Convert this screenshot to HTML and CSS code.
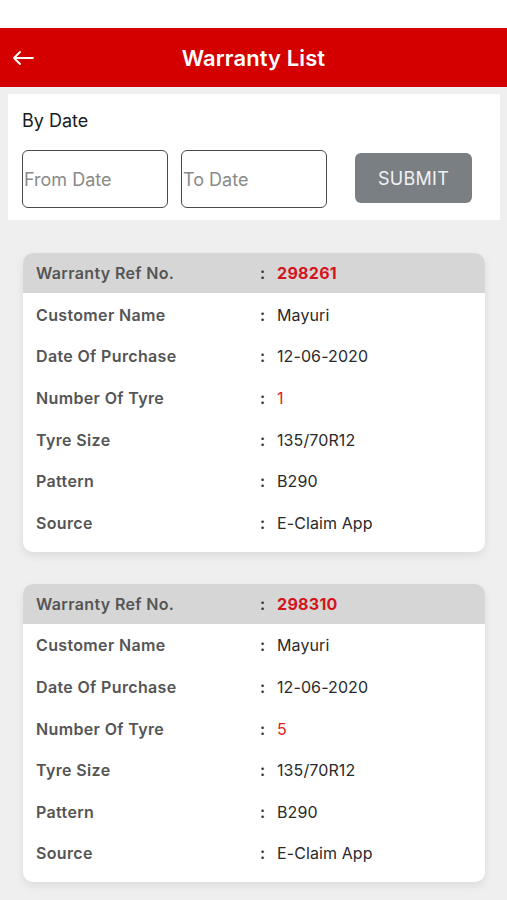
FILE: index.html
```html
<!DOCTYPE html>
<html lang="en">
<head>
    <meta charset="UTF-8">
    <meta name="viewport" content="width=device-width, initial-scale=1.0">
    <title>Warranty List</title>
    <link rel="stylesheet" href="styles.css">
</head>
<body>
    <div class="status-bar"></div>

    <header class="topbar">
        <span class="back">
            <svg width="22" height="14" viewBox="0 0 22 14">
                <path d="M21 7H2M8 1L2 7l6 6" fill="none" stroke="#fff" stroke-width="1.8" stroke-linecap="round" stroke-linejoin="round"/>
            </svg>
        </span>
        <h1>Warranty List</h1>
    </header>

    <!-- Фильтр по дате -->
    <div class="filter">
        <div class="filter-title">By Date</div>
        <div class="filter-row">
            <div class="date-box">From Date</div>
            <div class="date-box">To Date</div>
            <button class="submit">SUBMIT</button>
        </div>
    </div>

    <div class="list">
        <div class="card">
            <div class="card-head">
                <span class="label">Warranty Ref No.</span>
                <span class="colon">:</span>
                <span class="ref">298261</span>
            </div>
            <div class="card-body">
                <div class="row"><span class="label">Customer Name</span><span class="colon">:</span><span class="value">Mayuri</span></div>
                <div class="row"><span class="label">Date Of Purchase</span><span class="colon">:</span><span class="value">12-06-2020</span></div>
                <div class="row"><span class="label">Number Of Tyre</span><span class="colon">:</span><span class="value red">1</span></div>
                <div class="row"><span class="label">Tyre Size</span><span class="colon">:</span><span class="value">135/70R12</span></div>
                <div class="row"><span class="label">Pattern</span><span class="colon">:</span><span class="value">B290</span></div>
                <div class="row"><span class="label">Source</span><span class="colon">:</span><span class="value">E-Claim App</span></div>
            </div>
        </div>

        <div class="card">
            <div class="card-head">
                <span class="label">Warranty Ref No.</span>
                <span class="colon">:</span>
                <span class="ref">298310</span>
            </div>
            <div class="card-body">
                <div class="row"><span class="label">Customer Name</span><span class="colon">:</span><span class="value">Mayuri</span></div>
                <div class="row"><span class="label">Date Of Purchase</span><span class="colon">:</span><span class="value">12-06-2020</span></div>
                <div class="row"><span class="label">Number Of Tyre</span><span class="colon">:</span><span class="value red">5</span></div>
                <div class="row"><span class="label">Tyre Size</span><span class="colon">:</span><span class="value">135/70R12</span></div>
                <div class="row"><span class="label">Pattern</span><span class="colon">:</span><span class="value">B290</span></div>
                <div class="row"><span class="label">Source</span><span class="colon">:</span><span class="value">E-Claim App</span></div>
            </div>
        </div>
    </div>
</body>
</html>
```

FILE: styles.css
```css
* {
    box-sizing: border-box;
    margin: 0;
    padding: 0;
}

body {
    font-family: Inter, "Liberation Sans", Arial, sans-serif;
    background-color: #efefef;
    color: #222;
    overflow: hidden;
}

.status-bar {
    height: 28px;
    background: #fff;
}

.topbar {
    height: 59px;
    background: #d40000;
    display: flex;
    align-items: center;
    justify-content: center;
    position: relative;
}

.back {
    position: absolute;
    left: 12px;
    top: 23px;
    display: flex;
}

.topbar h1 {
    color: #fff;
    font-size: 22px;
    font-weight: 600;
    letter-spacing: 0.1px;
}

.filter {
    background: #fff;
    margin: 7px 7px 0 8px;
    height: 126px;
    padding: 15px 14px 0 14px;
}

.filter-title {
    font-size: 18px;
    color: #1c1c1c;
    line-height: 24px;
}

.filter-row {
    display: flex;
    align-items: center;
    margin-top: 17px;
}

.date-box {
    width: 146px;
    height: 58px;
    border: 1.5px solid #4a4a4a;
    border-radius: 6px;
    font-size: 18px;
    color: #8a8a8a;
    display: flex;
    align-items: center;
    padding-left: 1px;
    margin-right: 13px;
}

.submit {
    margin-left: 15px;
    margin-top: -2px;
    width: 117px;
    height: 50px;
    border: none;
    border-radius: 6px;
    background: #7a7f84;
    color: #f2f2f2;
    font-family: inherit;
    font-size: 18px;
    letter-spacing: 0.3px;
}

.list {
    padding: 33px 22px 0 23px;
}

.card {
    background: #fff;
    border-radius: 10px;
    overflow: hidden;
    margin-bottom: 32px;
    box-shadow: 0 4px 10px rgba(0, 0, 0, 0.08);
}

.card-head {
    background: #d6d6d6;
    height: 40px;
    display: flex;
    align-items: center;
    padding-left: 13px;
}

.card-body {
    padding: 1px 0 8px 13px;
}

.row {
    height: 41.6px;
    display: flex;
    align-items: center;
}

.label {
    width: 224px;
    font-size: 16px;
    font-weight: 600;
    color: #555;
    letter-spacing: 0.35px;
}

.colon {
    width: 17px;
    font-size: 16px;
    color: #333;
    font-weight: 600;
}

.value {
    font-size: 16px;
    color: #2a2a2a;
    letter-spacing: 0.1px;
}

.value.red {
    color: #e02020;
}

.ref {
    font-size: 16px;
    font-weight: 700;
    color: #d4141c;
    letter-spacing: 0.3px;
}
```
